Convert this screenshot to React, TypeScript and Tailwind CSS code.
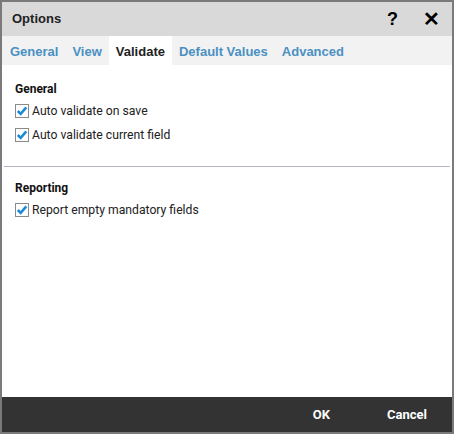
import React from 'react';

function Check({ label }: { label: string }) {
  return (
    <label className="flex items-center gap-[3px] h-[24px]">
      <span className="w-[14px] h-[14px] border border-[#8a8a8a] bg-white flex items-center justify-center">
        <svg width="12" height="12" viewBox="0 0 12 12">
          <path d="M1.8 6 L4.7 8.9 L10.3 2.4" fill="none" stroke="#1e8ad6" strokeWidth="2.6" />
        </svg>
      </span>
      <span className="text-[12.2px] text-[#222]">{label}</span>
    </label>
  );
}

export default function App() {
  const tabs = ['General', 'View', 'Validate', 'Default Values', 'Advanced'];
  return (
    <div className="w-[454px] h-[434px] border-2 border-[#7a7a7a] bg-white flex flex-col font-['Roboto',sans-serif]">
      {/* Title bar */}
      <div className="h-[34px] bg-[#d9d9d9] flex items-center justify-between pl-[10px] pr-[12px] shrink-0">
        <span className="text-[13px] font-bold text-[#222] font-['Liberation_Sans',sans-serif]">Options</span>
        <div className="flex items-center gap-[25px] font-['Liberation_Sans',sans-serif] font-bold text-black">
          <span className="text-[18px]">?</span>
          <span className="text-[20px] leading-none">✕</span>
        </div>
      </div>

      {/* Tabs */}
      <div className="h-[29px] pl-[1px] bg-[#f2f2f2] flex items-stretch shrink-0 font-['Liberation_Sans',sans-serif] text-[13px] font-bold">
        {tabs.map((t) => (
          <div
            key={t}
            className={
              t === 'Validate'
                ? 'px-[7px] pt-[2px] flex items-center bg-white text-[#222]'
                : 'px-[7px] pt-[2px] flex items-center text-[#4a90c2]'
            }
          >
            {t}
          </div>
        ))}
      </div>

      {/* Content */}
      <div className="flex-1 flex flex-col">
        <div className="pt-[15px] pl-[13px] pb-[19px]">
          <div className="text-[12px] font-bold text-[#111] mb-[1px]">General</div>
          <Check label="Auto validate on save" />
          <Check label="Auto validate current field" />
        </div>
        <div className="mx-[2px] border-t border-[#b4b4c4]" />
        <div className="pt-[12px] pl-[13px]">
          <div className="text-[12px] font-bold text-[#111] mb-[1px]">Reporting</div>
          <Check label="Report empty mandatory fields" />
        </div>
      </div>

      {/* Footer */}
      <div className="h-[35px] bg-[#333333] flex items-center justify-end pr-[25px] gap-[57px] shrink-0 text-white text-[13px] font-bold">
        <span>OK</span>
        <span>Cancel</span>
      </div>
    </div>
  );
}
